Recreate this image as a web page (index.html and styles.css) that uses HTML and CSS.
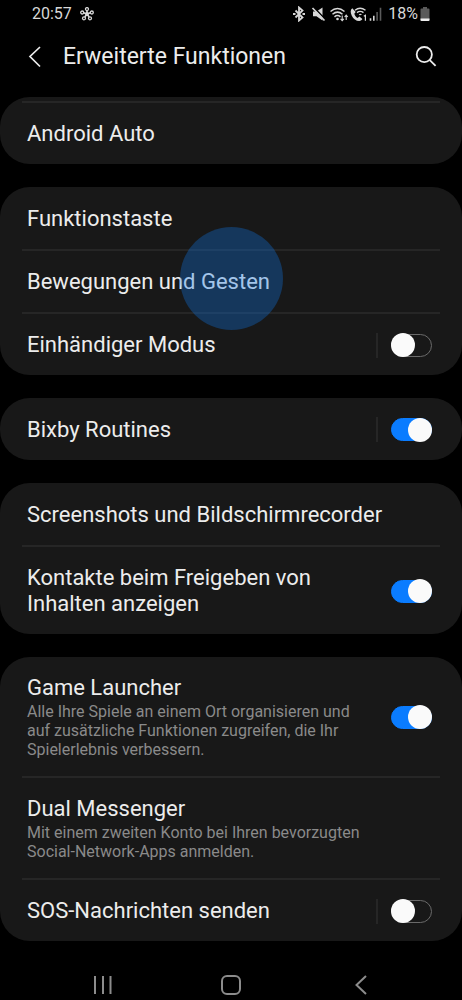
FILE: index.html
```html
<!DOCTYPE html>
<html lang="de">
<head>
<meta charset="utf-8">
<meta name="viewport" content="width=device-width, initial-scale=1">
<title>Erweiterte Funktionen</title>
<link rel="stylesheet" href="styles.css">
</head>
<body>
<div class="screen">
  <div class="status">
    <span>20:57</span>
    <svg class="status-app" width="14" height="14" viewBox="0 0 14 14" fill="none" stroke="currentColor" stroke-width="1.3" aria-hidden="true">
      <path d="M7 7V3.500M7 7L3.500 5.800M7 7l3.500-1.200M7 7L4.800 10M7 7l2.200 3" stroke-width="1.700"/>
      <circle cx="7" cy="2.100" r="1.500"/><circle cx="2.200" cy="5.500" r="1.500"/><circle cx="11.800" cy="5.500" r="1.500"/><circle cx="4" cy="11.300" r="1.500"/><circle cx="10" cy="11.300" r="1.500"/><circle cx="7" cy="7" r="1.300"/>
    </svg>
    <svg class="status-icons" width="90" height="16" viewBox="0 0 90 16" fill="none" stroke="currentColor" stroke-width="1.500" aria-hidden="true">
      <path d="M3.500 4.500l7 7L7 14.500v-13l3.500 3-7 7" stroke-width="1.800"/>
      <path d="M1 8h2.500M10.500 8H13" stroke-width="2.200"/>
      <path d="M21 5.500h3.500L30.500 1.500v13l-6-4.200H21z" fill="currentColor" stroke="none"/>
      <path d="M21.500 1l12 12.500" stroke="#000" stroke-width="1.600"/>
      <path d="M20.500 2l12 12.500" stroke-width="1.700"/>
      <path d="M38.500 5.500q7-6 14 0M40.500 8.200q5-4.200 10 0M42.500 10.800q3-2.400 6 0"/>
      <circle cx="45.500" cy="13" r="1.300" fill="currentColor" stroke="none"/>
      <path d="M50.200 9.500v5M48.600 12.800l1.600 1.800 1.600-1.800M54.200 14V9M52.600 11l1.600-1.800 1.600 1.800" stroke-width="1.100"/>
      <path d="M60.300 2.300c-2 1.200-2.100 4.200-.5 7.400s4.200 5.200 7.400 5.300c1.600 0 2.700-.8 3.200-1.900l-3-2.500-1.900 1.300c-1.500-.8-2.700-2.300-3.200-4.200l1.400-1.700z" fill="currentColor" stroke="none"/>
      <path d="M63 4.200q5-4 10.500 0M65 6.600q3.200-2.500 6.500 0M67.200 8.800q1.100-.9 2.200 0" stroke-width="1.400"/>
      <path d="M71.800 10.300l1.600-1v5.500" stroke-width="1.200"/>
      <path d="M78.500 14.800v-2.500M81.800 14.800v-5" stroke-width="1.600"/>
      <path d="M85.100 14.800V6M88.500 14.800v-13" stroke="#5a5a5a" stroke-width="1.600"/>
    </svg>
    <span>18%</span>
    <svg width="10" height="14" viewBox="0 0 10 14" aria-hidden="true">
      <path d="M3 0h4v1.500h1.500q1 0 1 1V13q0 1-1 1h-7q-1 0-1-1V2.500q0-1 1-1H3z" fill="#5a5a5a"/>
      <path d="M.5 11.500h9V13q0 1-1 1h-7q-1 0-1-1z" fill="#eee"/>
    </svg>
  </div>

  <header class="titlebar">
    <button class="icon-button" type="button" aria-label="Zurück">
      <svg width="14" height="22" viewBox="0 0 14 22" fill="none" stroke="currentColor" stroke-width="1.700"><path d="M12 1L2 10.500 12 20.500"/></svg>
    </button>
    <h1>Erweiterte Funktionen</h1>
    <button class="icon-button" type="button" aria-label="Suchen">
      <svg width="22" height="22" viewBox="0 0 22 22" fill="none" stroke="currentColor" stroke-width="1.800"><circle cx="9.300" cy="8.600" r="7.600"/><path d="M14.800 14.100l5.800 5.800"/></svg>
    </button>
  </header>

  <main class="settings">
    <ul class="card card-scrolled">
      <li class="row"><a href="#auto" class="title">Android Auto</a></li>
    </ul>
    <ul class="card">
      <li class="row"><a href="#taste" class="title">Funktionstaste</a></li>
      <li class="row"><a href="#gesten" class="title">Bewegungen und Gesten</a><span class="touch"></span></li>
      <li class="row"><label class="title" for="einhand">Einhändiger Modus</label><span class="separator"></span><input class="switch" type="checkbox" role="switch" id="einhand"></li>
    </ul>
    <ul class="card">
      <li class="row"><label class="title" for="bixby">Bixby Routines</label><span class="separator"></span><input class="switch" type="checkbox" role="switch" id="bixby" checked></li>
    </ul>
    <ul class="card">
      <li class="row"><a href="#screenshots" class="title">Screenshots und Bildschirmrecorder</a></li>
      <li class="row"><label class="title" for="kontakte">Kontakte beim Freigeben von Inhalten anzeigen</label><input class="switch" type="checkbox" role="switch" id="kontakte" checked></li>
    </ul>
    <ul class="card">
      <li class="row">
        <label class="title" for="game">Game Launcher<small class="summary">Alle Ihre Spiele an einem Ort organisieren und auf zusätzliche Funktionen zugreifen, die Ihr Spielerlebnis verbessern.</small></label>
        <input class="switch" type="checkbox" role="switch" id="game" checked>
      </li>
      <li class="row">
        <a href="#dual" class="title">Dual Messenger<small class="summary">Mit einem zweiten Konto bei Ihren bevorzugten Social-Network-Apps anmelden.</small></a>
      </li>
      <li class="row"><label class="title" for="sos">SOS-Nachrichten senden</label><span class="separator"></span><input class="switch" type="checkbox" role="switch" id="sos"></li>
    </ul>
  </main>

  <nav class="navbar" aria-label="Systemnavigation">
    <button class="icon-button" type="button" aria-label="Letzte Apps">
      <svg width="20" height="20" viewBox="0 0 20 20" fill="none" stroke="currentColor" stroke-width="2"><path d="M3 1v18M11 1v18M18.500 1v18"/></svg>
    </button>
    <button class="icon-button" type="button" aria-label="Startseite">
      <svg width="20" height="20" viewBox="0 0 20 20" fill="none" stroke="currentColor" stroke-width="2"><rect x="1" y="1" width="18" height="18" rx="5"/></svg>
    </button>
    <button class="icon-button" type="button" aria-label="Zurück">
      <svg width="20" height="20" viewBox="0 0 20 20" fill="none" stroke="currentColor" stroke-width="2"><path d="M16 1L6.500 10l9.500 9"/></svg>
    </button>
  </nav>
</div>
</body>
</html>
```
FILE: styles.css
```css
* {
  box-sizing: border-box;
}

body {
  margin: 0;
  background: #000;
  color: #ececec;
  font-family: Roboto, "Noto Sans", sans-serif;
}

.screen {
  display: flex;
  flex-direction: column;
  min-height: 100vh;
}

.status {
  display: flex;
  align-items: center;
  height: 27px;
  padding: 0 32px;
  font-size: 16px;
  color: #d8d8d8;
}

.status-app {
  margin-left: 8px;
}

.status-icons {
  margin: 0 6px 0 auto;
}

.status span + svg:last-child {
  margin-left: 2px;
}

.titlebar {
  display: flex;
  align-items: center;
  height: 60px;
  padding: 0 25px 0 28px;
}

.titlebar h1 {
  flex: 1;
  margin: 0 0 0 21px;
  font-size: 23px;
  font-weight: 400;
  line-height: 28px;
}

.icon-button {
  display: flex;
  padding: 0;
  border: 0;
  background: none;
  color: inherit;
}

.settings {
  display: flex;
  flex-direction: column;
  gap: 23px;
  margin-top: 10px;
}

.card {
  margin: 0;
  padding: 0 22px;
  border-radius: 30px;
  background: #181818;
  list-style: none;
}

.row {
  position: relative;
  display: flex;
  align-items: center;
  min-height: 62px;
  padding: 18px 8px 17px 5px;
}

.row + .row,
.card-scrolled .row {
  border-top: 2px solid #262626;
}

.card-scrolled {
  padding-top: 4px;
}

.title {
  flex: 1;
  padding-right: 24px;
  color: inherit;
  font-size: 22px;
  line-height: 26px;
  text-decoration: none;
}

.summary {
  display: block;
  margin-top: 1px;
  color: #8a8a8a;
  font-size: 16px;
  line-height: 19px;
}

.separator {
  width: 2px;
  height: 25px;
  margin-right: 13px;
  background: #262626;
}

.switch {
  appearance: none;
  display: flex;
  align-items: center;
  width: 41px;
  height: 23px;
  margin: 0;
  border: 1px solid #6a6a6a;
  border-radius: 12px;
}

.switch::before {
  content: "";
  flex: none;
  width: 24px;
  height: 24px;
  margin: 0 -1px;
  border-radius: 50%;
  background: #fafafa;
}

.switch:checked {
  justify-content: flex-end;
  border-color: #0a7cff;
  background: #0a7cff;
}

.touch {
  position: absolute;
  top: 50%;
  left: 50%;
  width: 103px;
  height: 103px;
  margin: -55px 0 0 -51px;
  border-radius: 50%;
  background: rgba(15, 118, 230, 0.33);
  z-index: 1;
  pointer-events: none;
}

.navbar {
  display: flex;
  justify-content: space-between;
  margin-top: auto;
  padding: 0 20% 5px;
  color: #8c8c8c;
}
```
